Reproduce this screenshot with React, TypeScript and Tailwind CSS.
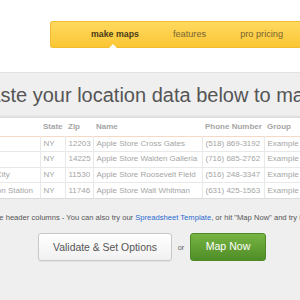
import React from "react";

const rows = [
  { city: "Albany", state: "NY", zip: "12203", name: "Apple Store Cross Gates", phone: "(518) 869-3192", group: "Example Group" },
  { city: "Buffalo", state: "NY", zip: "14225", name: "Apple Store Walden Galleria", phone: "(716) 685-2762", group: "Example Group" },
  { city: "Garden City", state: "NY", zip: "11530", name: "Apple Store Roosevelt Field", phone: "(516) 248-3347", group: "Example Group" },
  { city: "Huntington Station", state: "NY", zip: "11746", name: "Apple Store Walt Whitman", phone: "(631) 425-1563", group: "Example Group" },
];

const App = () => {
  return (
    <div className="w-[300px] h-[300px] overflow-hidden bg-white font-['Liberation_Sans',Arial,sans-serif]">
      {/* top nav */}
      <div className="h-[72px] pt-[21px] pl-[50px]">
        <div className="relative h-[27px] flex items-center pl-[40px] gap-[34px] rounded-l-[3px] border border-r-0 border-[#f2bd32] bg-gradient-to-b from-[#ffd95e] to-[#fbc632] text-[9.2px] whitespace-nowrap">
          <span className="font-bold text-[#4a3d16] text-[8.8px]">make maps</span>
          <span className="text-[#7a6530]">features</span>
          <span className="text-[#7a6530]">pro pricing</span>
          <div className="absolute left-[58px] -bottom-px w-0 h-0 border-l-[4px] border-r-[4px] border-b-[4px] border-l-transparent border-r-transparent border-b-white" />
        </div>
      </div>

      <div className="bg-[#efefef] border-t border-[#e2e2e2] h-[228px]">
        <div className="h-[44px] flex items-center whitespace-nowrap -ml-[24px] text-[20px] text-[#555]">
          Paste your location data below to map it!
        </div>

        <div className="-ml-[36px] bg-white border-y border-[#dcdcdc] shadow-[0_-1px_2px_rgba(0,0,0,0.08)]">
          <table className="w-[390px] border-collapse text-[8px] text-[#a5a5a5] whitespace-nowrap table-fixed">
            <colgroup>
              <col className="w-[76px]" />
              <col className="w-[25px]" />
              <col className="w-[28px]" />
              <col className="w-[109px]" />
              <col className="w-[62px]" />
              <col className="w-[90px]" />
            </colgroup>
            <thead>
              <tr className="h-[18px] border-b border-[#f6d8c6] text-left text-[#a5a5a5]">
                <th className="px-[3px] font-bold">City</th>
                <th className="px-[3px] font-bold">State</th>
                <th className="px-[3px] font-bold">Zip</th>
                <th className="px-[3px] font-bold">Name</th>
                <th className="px-[3px] font-bold">Phone Number</th>
                <th className="px-[3px] font-bold">Group</th>
              </tr>
            </thead>
            <tbody>
              {rows.map((r) => (
                <tr key={r.zip} className="h-[15.5px] border-b border-[#e8e8e8] last:border-b-0">
                  <td className="px-[3px] border-r border-[#e8e8e8] overflow-hidden">{r.city}</td>
                  <td className="px-[3px] border-r border-[#e8e8e8]">{r.state}</td>
                  <td className="px-[3px] border-r border-[#e8e8e8]">{r.zip}</td>
                  <td className="px-[3px] border-r border-[#e8e8e8]">{r.name}</td>
                  <td className="px-[3px] border-r border-[#e8e8e8]">{r.phone}</td>
                  <td className="px-[3px]">{r.group}</td>
                </tr>
              ))}
            </tbody>
          </table>
        </div>

        <p className="mt-[13px] -ml-[7px] whitespace-nowrap text-[7.6px] text-[#555]">
          the header columns - You can also try our{" "}
          <span className="text-[#2a6ad0]">Spreadsheet Template</span>, or hit "Map Now" and try it out!
        </p>

        <div className="mt-[10px] pl-[38px] flex items-center">
          <button className="w-[134px] h-[28px] rounded-[3px] border border-[#c8c8c8] bg-gradient-to-b from-white to-[#f1f1f1] text-[10.4px] text-[#555] shadow-[0_1px_1px_rgba(0,0,0,0.05)]">
            Validate &amp; Set Options
          </button>
          <span className="w-[18px] text-center text-[7.5px] text-[#666]">or</span>
          <button className="w-[76px] h-[28px] rounded-[3px] border border-[#4d8a26] bg-gradient-to-b from-[#77b443] to-[#4f8e27] text-[10.6px] text-white">
            Map Now
          </button>
        </div>
      </div>
    </div>
  );
};

export default App;
